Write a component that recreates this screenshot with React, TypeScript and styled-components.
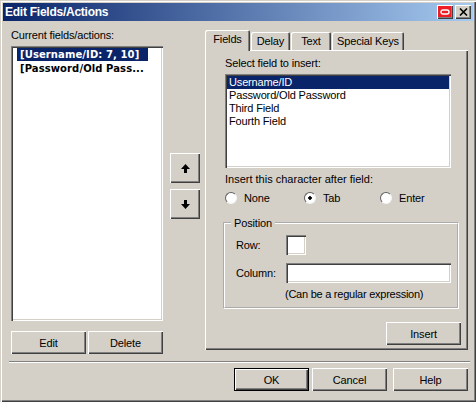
import React from 'react';
import styled, { createGlobalStyle } from 'styled-components';

const GlobalStyle = createGlobalStyle`
  html, body {
    margin: 0;
    padding: 0;
    background: #d4d0c8;
  }
  * {
    box-sizing: border-box;
  }
`;

const raised = 'inset 1px 1px 0 #fff, inset -1px -1px 0 #404040, inset -2px -2px 0 #808080';
const sunken =
  'inset 1px 1px 0 #808080, inset 2px 2px 0 #404040, inset -1px -1px 0 #fff, inset -2px -2px 0 #d4d0c8';

const Window = styled.div`
  width: 476px;
  height: 402px;
  padding: 3px;
  display: flex;
  flex-direction: column;
  background: #d4d0c8;
  box-shadow: inset 1px 1px 0 #d4d0c8, inset 2px 2px 0 #fff, inset -1px -1px 0 #404040, inset -2px -2px 0 #808080;
  font-family: 'Liberation Sans', Arial, sans-serif;
  font-size: 11px;
  letter-spacing: -0.15px;
  color: #000;
`;

const TitleBar = styled.div`
  height: 18px;
  flex: none;
  display: flex;
  align-items: center;
  padding: 0 2px;
  gap: 2px;
  background: linear-gradient(90deg, #0a246a, #a6caf0);
`;

const Title = styled.div`
  flex: 1;
  color: #fff;
  font-weight: bold;
  font-size: 12px;
  letter-spacing: -0.25px;
`;

const CaptionButton = styled.button<{ $red?: boolean }>`
  width: 16px;
  height: 14px;
  padding: 0;
  border: 0;
  display: flex;
  align-items: center;
  justify-content: center;
  background: ${(props) => (props.$red ? '#ee1c25' : '#d4d0c8')};
  box-shadow: ${raised};
`;

const Main = styled.div`
  display: flex;
  height: 329px;
  flex: none;
  padding-left: 8px;
`;

const LeftColumn = styled.div`
  width: 152px;
  padding-top: 7px;
  display: flex;
  flex-direction: column;
  & > * {
    flex: none;
  }
`;

const Label = styled.div`
  height: 14px;
  line-height: 14px;
`;

const FieldLabel = styled(Label)`
  margin-bottom: 4px;
`;

const ActionList = styled.div`
  width: 152px;
  height: 275px;
  padding: 2px 15px 2px 6px;
  background: #fff;
  box-shadow: ${sunken};
  font-family: 'DejaVu Sans', sans-serif;
  font-weight: bold;
  font-size: 10px;
  letter-spacing: 0.1px;
`;

const ActionItem = styled.div<{ $selected?: boolean }>`
  height: 13px;
  line-height: 13px;
  margin-bottom: 1px;
  padding-left: 3px;
  white-space: nowrap;
  background: ${(props) => (props.$selected ? '#0a246a' : 'transparent')};
  color: ${(props) => (props.$selected ? '#fff' : '#000')};
`;

const ButtonRow = styled.div`
  display: flex;
  gap: 2px;
  margin-top: 10px;
`;

const Button = styled.button<{ $default?: boolean }>`
  width: 75px;
  height: 23px;
  padding: 0;
  border: 0;
  background: #d4d0c8;
  font: inherit;
  letter-spacing: inherit;
  color: #000;
  box-shadow: ${(props) =>
    props.$default
      ? 'inset 0 0 0 1px #000, inset 2px 2px 0 #fff, inset -2px -2px 0 #404040, inset -3px -3px 0 #808080'
      : raised};
`;

const ArrowColumn = styled.div`
  width: 30px;
  margin-left: 7px;
  padding-top: 132px;
  display: flex;
  flex-direction: column;
  gap: 6px;
`;

const ArrowButton = styled(Button)`
  width: 30px;
  height: 30px;
  display: flex;
  align-items: center;
  justify-content: center;
`;

const RightColumn = styled.div`
  width: 263px;
  margin-left: 5px;
  padding-top: 9px;
`;

const TabRow = styled.div`
  display: flex;
  align-items: flex-end;
  gap: 1px;
  height: 20px;
`;

const Tab = styled.div<{ $active?: boolean; $width: number }>`
  position: relative;
  z-index: 1;
  width: ${(props) => props.$width}px;
  height: ${(props) => (props.$active ? 21 : 18)}px;
  margin-bottom: ${(props) => (props.$active ? -1 : 0)}px;
  line-height: ${(props) => (props.$active ? 19 : 18)}px;
  text-align: center;
  background: #d4d0c8;
  border-radius: 2px 2px 0 0;
  box-shadow: inset 1px 1px 0 #fff, inset -1px 0 0 #404040, inset -2px 0 0 #808080;
`;

const Panel = styled.div`
  height: 300px;
  padding: 6px 7px 0 20px;
  display: flex;
  flex-direction: column;
  box-shadow: ${raised};
`;

const FieldList = styled.div`
  width: 226px;
  height: 94px;
  padding: 2px;
  background: #fff;
  box-shadow: ${sunken};
`;

const FieldItem = styled.div<{ $selected?: boolean }>`
  height: 13px;
  line-height: 13px;
  padding-left: 2px;
  background: ${(props) => (props.$selected ? '#0a246a' : 'transparent')};
  color: ${(props) => (props.$selected ? '#fff' : '#000')};
`;

const InsertLabel = styled(Label)`
  margin-top: 4px;
  letter-spacing: 0;
`;

const RadioRow = styled.div`
  display: flex;
  height: 14px;
  margin-top: 5px;
`;

const RadioOption = styled.label<{ $width: number }>`
  width: ${(props) => props.$width}px;
  display: flex;
  align-items: center;
  gap: 7px;
`;

const Radio = styled.input`
  appearance: none;
  width: 12px;
  height: 12px;
  margin: 0;
  border: 1px solid;
  border-color: #606060 #f4f4f4 #f4f4f4 #606060;
  border-radius: 50%;
  background: #fff;
  &:checked {
    background: radial-gradient(circle, #000 0 1.5px, #fff 2px);
  }
`;

const GroupBox = styled.fieldset`
  width: 236px;
  height: 93px;
  margin: 11px 0 0 -2px;
  padding: 0 7px 0 11px;
  min-width: 0;
  border: 2px groove #fff;
`;

const GroupLegend = styled.legend`
  margin-left: -5px;
  padding: 0 3px;
  height: 14px;
  line-height: 14px;
`;

const FormGrid = styled.div`
  display: grid;
  grid-template-columns: 50px 1fr;
  grid-template-rows: 20px 20px;
  row-gap: 8px;
  align-items: center;
  margin-top: 5px;
`;

const TextInput = styled.input<{ $narrow?: boolean }>`
  width: ${(props) => (props.$narrow ? '20px' : '165px')};
  height: 20px;
  border: 0;
  padding: 0;
  background: #fff;
  box-shadow: ${sunken};
`;

const Hint = styled.div`
  margin: 4px 0 0 49px;
  height: 14px;
  line-height: 14px;
  white-space: nowrap;
  letter-spacing: -0.25px;
`;

const InsertButton = styled(Button)`
  align-self: flex-end;
  margin-top: 13px;
`;

const Separator = styled.div`
  height: 2px;
  flex: none;
  margin: 11px 3px 0 6px;
  background: linear-gradient(#808080 50%, #fff 50%);
`;

const Footer = styled.div`
  display: flex;
  margin-top: 5px;
  padding-left: 231px;
  gap: 3px;
`;

const HelpButton = styled(Button)`
  margin-left: 3px;
`;

const ArrowIcon = ({ down }: { down?: boolean }) => (
  <svg width="9" height="9" viewBox="0 0 9 9">
    <path d={down ? 'M3 0h3v4h3L4.5 9 0 4h3z' : 'M3 9h3V5h3L4.5 0 0 5h3z'} fill="#000" />
  </svg>
);

const App = () => (
  <Window>
    <GlobalStyle />
    <TitleBar>
      <Title>Edit Fields/Actions</Title>
      <CaptionButton $red>
        <svg width="10" height="6" viewBox="0 0 10 6">
          <rect x="1" y="1" width="8" height="4" rx="2" fill="none" stroke="#fff" strokeWidth="1.4" />
        </svg>
      </CaptionButton>
      <CaptionButton>
        <svg width="9" height="8" viewBox="0 0 9 8">
          <path d="M1 0.5l7 7M8 0.5l-7 7" stroke="#000" strokeWidth="1.6" fill="none" />
        </svg>
      </CaptionButton>
    </TitleBar>
    <Main>
      <LeftColumn>
        <FieldLabel>Current fields/actions:</FieldLabel>
        <ActionList>
          <ActionItem $selected>[Username/ID: 7, 10]</ActionItem>
          <ActionItem>[Password/Old Pass...</ActionItem>
        </ActionList>
        <ButtonRow>
          <Button>Edit</Button>
          <Button>Delete</Button>
        </ButtonRow>
      </LeftColumn>
      <ArrowColumn>
        <ArrowButton aria-label="Up">
          <ArrowIcon />
        </ArrowButton>
        <ArrowButton aria-label="Down">
          <ArrowIcon down />
        </ArrowButton>
      </ArrowColumn>
      <RightColumn>
        <TabRow>
          <Tab $active $width={45}>Fields</Tab>
          <Tab $width={39}>Delay</Tab>
          <Tab $width={40}>Text</Tab>
          <Tab $width={72}>Special Keys</Tab>
        </TabRow>
        <Panel>
          <FieldLabel>Select field to insert:</FieldLabel>
          <FieldList>
            <FieldItem $selected>Username/ID</FieldItem>
            <FieldItem>Password/Old Password</FieldItem>
            <FieldItem>Third Field</FieldItem>
            <FieldItem>Fourth Field</FieldItem>
          </FieldList>
          <InsertLabel>Insert this character after field:</InsertLabel>
          <RadioRow>
            <RadioOption $width={79}>
              <Radio type="radio" name="after" />
              None
            </RadioOption>
            <RadioOption $width={76}>
              <Radio type="radio" name="after" defaultChecked />
              Tab
            </RadioOption>
            <RadioOption $width={60}>
              <Radio type="radio" name="after" />
              Enter
            </RadioOption>
          </RadioRow>
          <GroupBox>
            <GroupLegend>Position</GroupLegend>
            <FormGrid>
              <span>Row:</span>
              <TextInput $narrow />
              <span>Column:</span>
              <TextInput />
            </FormGrid>
            <Hint>(Can be a regular expression)</Hint>
          </GroupBox>
          <InsertButton>Insert</InsertButton>
        </Panel>
      </RightColumn>
    </Main>
    <Separator />
    <Footer>
      <Button $default>OK</Button>
      <Button>Cancel</Button>
      <HelpButton>Help</HelpButton>
    </Footer>
  </Window>
);

export default App;
